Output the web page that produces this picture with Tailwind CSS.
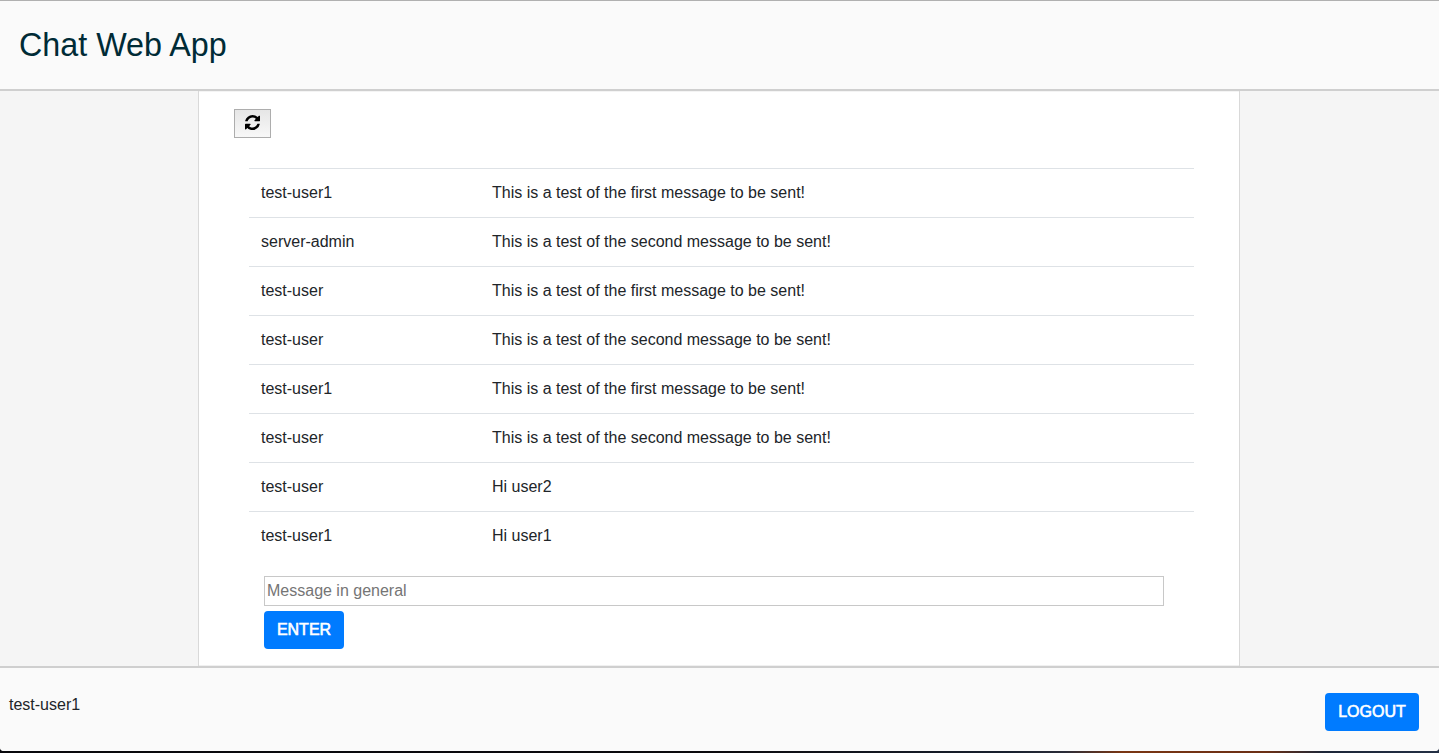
<!DOCTYPE html>
<html lang="en">
<head>
<meta charset="utf-8">
<title>Chat Web App</title>
<script src="https://cdn.jsdelivr.net/npm/@tailwindcss/browser@4"></script>
</head>
<body class="h-[753px] overflow-hidden bg-[linear-gradient(90deg,#08080c_0%,#0b0a0d_50%,#18202e_70%,#2a2c38_74%,#7a3512_78%,#6b2f14_88%,#1c2638_92%,#232f44_100%)] font-['Liberation_Sans',Arial,sans-serif] text-base text-[#212529]">
<div class="flex h-[751px] flex-col overflow-hidden rounded-b-[4px] bg-[#f5f5f5]">
  <header class="flex h-[91px] shrink-0 items-center border-t border-b-2 border-t-[#b0b0b0] border-b-[#cfcfcf] bg-[#fafafa] pl-[19px]">
    <h1 class="text-[32.3px] leading-10 text-[#002b36]">Chat Web App</h1>
  </header>
  <main class="ml-[198px] flex h-[575px] w-[1042px] shrink-0 flex-col items-start border-x border-[#d9d9d9] bg-white pt-[18px] pl-[35px] shadow-[inset_0_1px_0_#f4f4f4,inset_0_-1px_0_#f0f0f0]">
    <button aria-label="Refresh" class="flex h-[29px] w-[37px] items-center justify-center border border-[#adadad] bg-linear-to-b from-[#e6e6e6] to-[#f8f8f8] pb-[2px]">
      <svg class="size-[15px]" viewBox="0 0 1536 1536" fill="#000"><path d="M1511 928q0 5-1 7-64 268-268 434.500t-478 166.500q-146 0-282.500-55t-243.500-157l-129 129q-19 19-45 19t-45-19-19-45v-448q0-26 19-45t45-19h448q26 0 45 19t19 45-19 45l-137 137q71 66 161 102t187 36q134 0 250-65t186-179q11-17 53-117 8-23 30-23h192q13 0 22.500 9.500t9.500 22.500zm25-800v448q0 26-19 45t-45 19h-448q-26 0-45-19t-19-45 19-45l138-138q-148-137-349-137-134 0-250 65t-186 179q-11 17-53 117-8 23-30 23h-199q-13 0-22.500-9.500t-9.500-22.500v-7q65-268 270-434.500t480-166.500q146 0 284 55.500t245 156.500l130-129q19-19 45-19t45 19 19 45z"/></svg>
    </button>
    <table class="mt-[30px] ml-[15px] w-[945px] table-fixed border-collapse">
      <colgroup><col class="w-[231px]"><col></colgroup>
      <tbody>
        <tr class="h-[49px] border-t border-[#dee2e6]"><td class="px-3">test-user1</td><td class="px-3">This is a test of the first message to be sent!</td></tr>
        <tr class="h-[49px] border-t border-[#dee2e6]"><td class="px-3">server-admin</td><td class="px-3">This is a test of the second message to be sent!</td></tr>
        <tr class="h-[49px] border-t border-[#dee2e6]"><td class="px-3">test-user</td><td class="px-3">This is a test of the first message to be sent!</td></tr>
        <tr class="h-[49px] border-t border-[#dee2e6]"><td class="px-3">test-user</td><td class="px-3">This is a test of the second message to be sent!</td></tr>
        <tr class="h-[49px] border-t border-[#dee2e6]"><td class="px-3">test-user1</td><td class="px-3">This is a test of the first message to be sent!</td></tr>
        <tr class="h-[49px] border-t border-[#dee2e6]"><td class="px-3">test-user</td><td class="px-3">This is a test of the second message to be sent!</td></tr>
        <tr class="h-[49px] border-t border-[#dee2e6]"><td class="px-3">test-user</td><td class="px-3">Hi user2</td></tr>
        <tr class="h-[49px] border-t border-[#dee2e6]"><td class="px-3">test-user1</td><td class="px-3">Hi user1</td></tr>
      </tbody>
    </table>
    <form class="mt-[15px] ml-[30px] flex flex-col items-start gap-[5px]">
      <input type="text" placeholder="Message in general" class="h-[30px] w-[900px] border border-[#c8c8c8] bg-white px-[2px] placeholder:text-[#757575]">
      <button type="button" class="h-[38px] w-20 rounded bg-[#007bff] text-white [-webkit-text-stroke:0.6px_white]">ENTER</button>
    </form>
  </main>
  <footer class="flex h-[85px] shrink-0 items-center justify-between border-t-2 border-[#cfcfcf] bg-[#fafafa] pr-5 pl-[9px]">
    <span class="-mt-2.5">test-user1</span>
    <button class="mt-[5px] h-[38px] w-[94px] rounded bg-[#007bff] text-white [-webkit-text-stroke:0.6px_white]">LOGOUT</button>
  </footer>
</div>
</body>
</html>
